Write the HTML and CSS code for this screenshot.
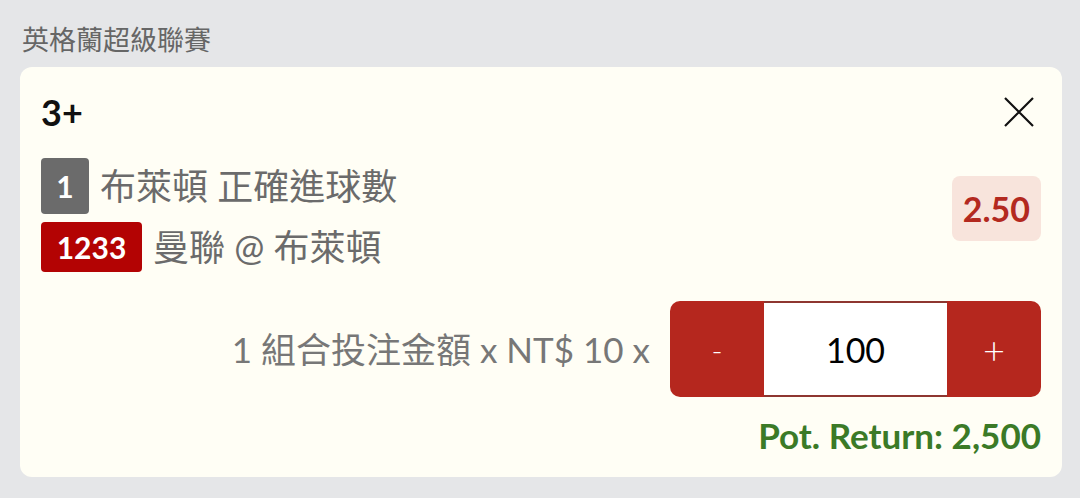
FILE: index.html
```html
<!DOCTYPE html>
<html lang="zh-Hant">
<head>
<meta charset="utf-8">
<title>投注單</title>
<link rel="stylesheet" href="styles.css">
</head>
<body>
  <div class="league">英格蘭超級聯賽</div>
  <div class="card">
    <div class="head">
      <div class="bet-type">3+</div>
      <div class="close" aria-label="close">
        <svg width="30" height="30" viewBox="0 0 30 30"><path d="M1 1 L29 29 M29 1 L1 29" stroke="#111" stroke-width="2.2" fill="none"/></svg>
      </div>
    </div>
    <div class="selection">
      <div class="legs">
        <div class="leg"><span class="badge badge-gray">1</span><span class="leg-text">布萊頓 正確進球數</span></div>
        <div class="leg"><span class="badge badge-red">1233</span><span class="leg-text">曼聯 @ 布萊頓</span></div>
      </div>
      <div class="odds">2.50</div>
    </div>
    <div class="stake">
      <div class="stake-text">1 組合投注金額 x NT$ 10 x</div>
      <div class="stepper">
        <div class="btn btn-minus">-</div>
        <div class="amount">100</div>
        <div class="btn btn-plus">+</div>
      </div>
    </div>
    <div class="pot">Pot. Return: 2,500</div>
  </div>
</body>
</html>
```

FILE: styles.css
```css
html, body {
  margin: 0;
  padding: 0;
}
body {
  background: #e5e6e8;
  font-family: "Lato", "Noto Sans CJK TC", sans-serif;
  width: 1080px;
  height: 498px;
  overflow: hidden;
}
.league {
  padding: 25px 22px 0 22px;
  font-size: 27px;
  line-height: 30px;
  color: #666;
  margin-bottom: 12px;
}
.card {
  margin: 0 18px 0 20px;
  background: #fffef5;
  border-radius: 12px;
  padding: 23px 21px 23px 21px;
}
.head {
  display: flex;
  justify-content: space-between;
  align-items: center;
  height: 44px;
}
.bet-type {
  font-weight: 700;
  font-size: 36px;
  line-height: 44px;
  color: #111;
}
.close {
  width: 30px;
  height: 30px;
  margin-right: 7px;
}
.close svg {
  display: block;
}
.selection {
  display: flex;
  justify-content: space-between;
  align-items: flex-start;
  margin-top: 24px;
}
.legs {
  display: flex;
  flex-direction: column;
  gap: 8px;
}
.leg {
  display: flex;
  align-items: center;
  gap: 11px;
  font-size: 36px;
  line-height: 44px;
  color: #6b6b6b;
}
.badge {
  display: flex;
  align-items: center;
  justify-content: center;
  font-weight: 700;
  font-size: 30px;
  color: #fff;
  border-radius: 4px;
  box-sizing: border-box;
}
.badge-gray {
  width: 48px;
  height: 56px;
  background: #6b6b6b;
}
.badge-red {
  height: 50px;
  width: 101px;
  background: #b30303;
}
.leg-text {
  display: block;
}
.odds {
  margin-top: 18px;
  height: 65px;
  padding: 0 11px;
  background: #f8e4dc;
  border-radius: 8px;
  font-weight: 700;
  font-size: 34px;
  color: #b3291f;
  display: flex;
  align-items: center;
}
.stake {
  display: flex;
  justify-content: flex-end;
  align-items: center;
  gap: 20px;
  margin-top: 29px;
}
.stake-text {
  font-size: 35px;
  line-height: 44px;
  color: #777;
}
.stepper {
  display: flex;
  width: 371px;
  height: 96px;
  border-radius: 10px;
  overflow: hidden;
  background: #b5271e;
}
.btn {
  width: 94px;
  display: flex;
  align-items: center;
  justify-content: center;
  color: #fff;
  font-weight: 300;
}
.btn-minus {
  font-size: 30px;
}
.btn-plus {
  font-size: 38px;
}
.amount {
  width: 183px;
  box-sizing: border-box;
  background: #fff;
  border-top: 2px solid #8e3630;
  border-bottom: 2px solid #8e3630;
  display: flex;
  align-items: center;
  justify-content: center;
  font-size: 34px;
  color: #000;
}
.pot {
  text-align: right;
  margin-top: 19px;
  font-weight: 700;
  font-size: 35px;
  line-height: 38px;
  color: #3b7a27;
}
```
